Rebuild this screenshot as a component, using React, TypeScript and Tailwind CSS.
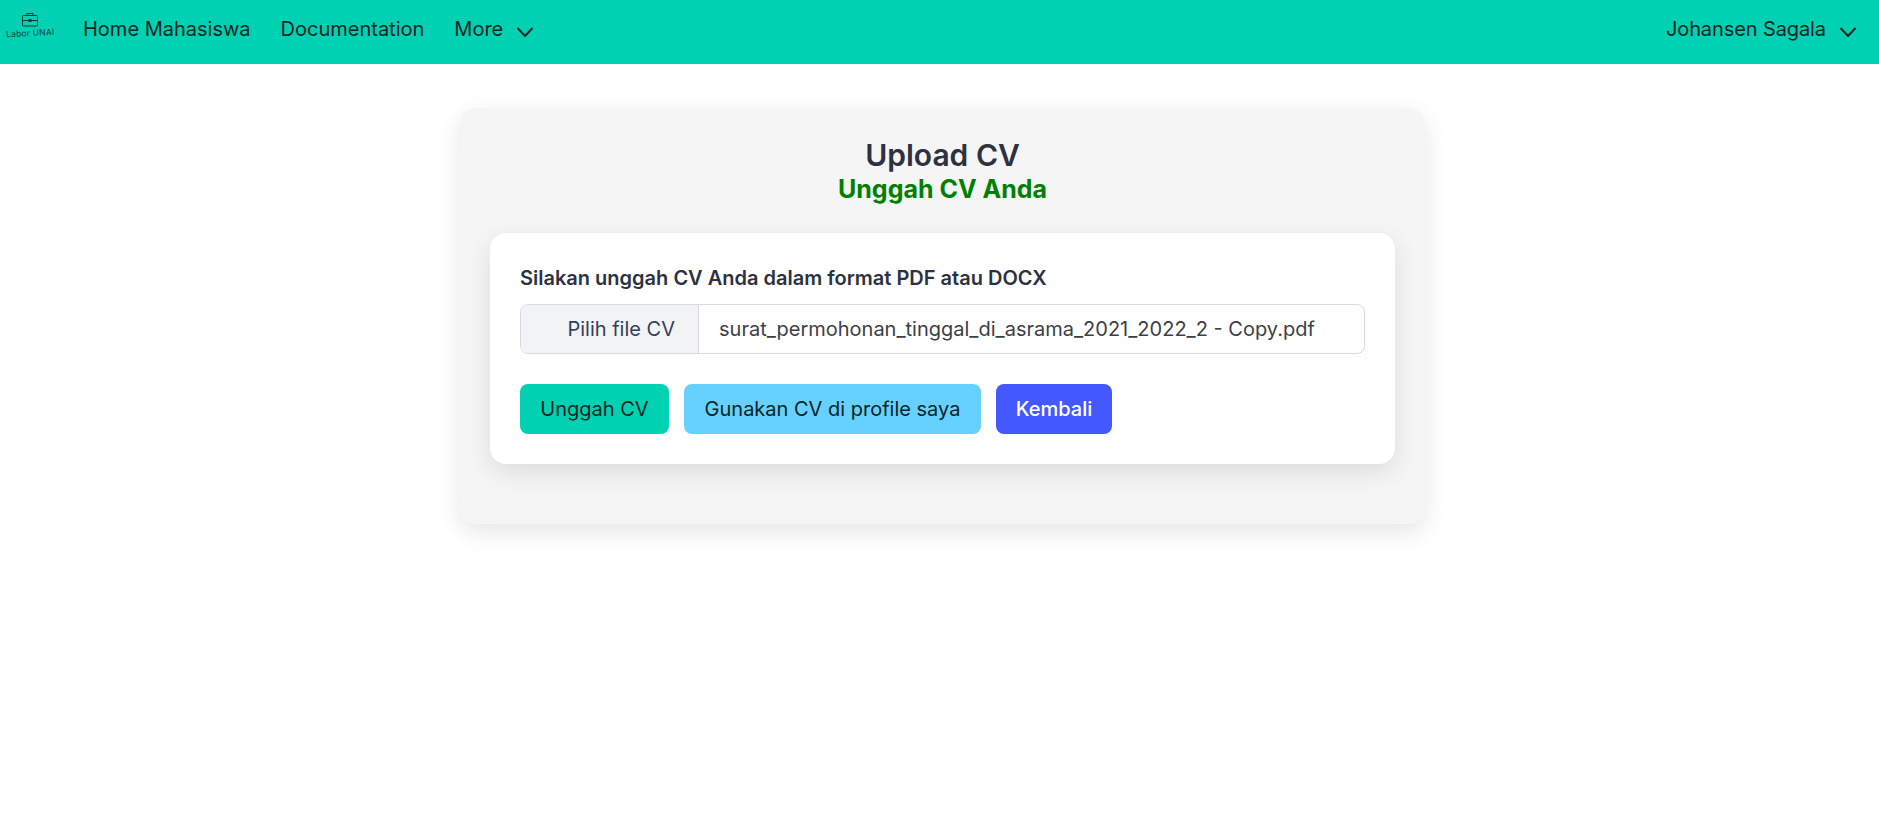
import React from "react";

const Chevron = () => (
  <svg width="20" height="12" viewBox="0 0 20 12" fill="none" className="block">
    <path d="M2.5 2 L10 10 L17.5 2" stroke="#0b2523" strokeWidth="2" />
  </svg>
);

const Logo = () => (
  <div className="flex flex-col items-center w-[44px] ml-[8px] mt-[-14px]">
    <svg width="18" height="15" viewBox="0 0 18 15" fill="none" stroke="#0b3b38" strokeWidth="1">
      <rect x="1.5" y="3.5" width="15" height="10.5" rx="1" />
      <path d="M6 3.5V1.5H12V3.5M1.5 8.5H16.5" />
      <rect x="8" y="7.5" width="2" height="2" fill="#0b3b38" />
    </svg>
    <span className="text-[8.5px] tracking-[0.2px] leading-[10px] mt-[1px] text-[#0b3b38] whitespace-nowrap font-['Inter',sans-serif] -rotate-3">
      Labor UNAI
    </span>
  </div>
);

export default function App() {
  return (
    <div className="min-h-[821px] bg-white font-['Inter',sans-serif] text-[20px] text-[#0b2523]">
      <nav className="h-16 bg-[#00d1b2] flex items-center pr-[21px]">
        <Logo />
        <div className="flex items-center ml-[31px] mt-[-6px] gap-[30px]">
          <span>Home Mahasiswa</span>
          <span>Documentation</span>
          <span className="flex items-center gap-[12px]">
            More
            <span className="mt-[6px]"><Chevron /></span>
          </span>
        </div>
        <div className="ml-auto flex items-center gap-[12px] mt-[-6px]">
          <span className="tracking-[-0.1px]">Johansen Sagala</span>
          <span className="mt-[6px]"><Chevron /></span>
        </div>
      </nav>

      <main className="ml-[460px] mt-[44px] w-[965px] h-[416px] rounded-2xl bg-[#f5f5f5] shadow-[0_8px_24px_rgba(0,0,0,0.1)] px-[30px] pt-[28px]">
        <h1 className="text-center text-[30px] leading-[38px] font-semibold text-[#2c3240]">Upload CV</h1>
        <h2 className="text-center text-[25px] leading-[30px] font-bold text-[#008000]">Unggah CV Anda</h2>
        <section className="mt-[29px] h-[231px] rounded-2xl bg-white shadow-[0_8px_24px_rgba(0,0,0,0.1)] px-[30px] pt-[32px]">
          <p className="text-[20px] leading-[27px] font-semibold text-[#2c3240]">
            Silakan unggah CV Anda dalam format PDF atau DOCX
          </p>
          <div className="mt-[12px] h-[50px] flex rounded-lg border border-[#d9d9e3] overflow-hidden">
            <div className="w-[178px] bg-[#f2f3f5] border-r border-[#d9d9e3] flex items-center justify-end pr-[23px] text-[#33415c]">
              Pilih file CV
            </div>
            <div className="flex-1 flex items-center pl-[20px] text-[#3b3f48]">
              surat_permohonan_tinggal_di_asrama_2021_2022_2 - Copy.pdf
            </div>
          </div>
          <div className="mt-[30px] flex gap-[15px]">
            <button className="h-[50px] w-[149px] rounded-lg bg-[#00d1b2] text-[#0b2523]">Unggah CV</button>
            <button className="h-[50px] w-[297px] rounded-lg bg-[#66d0ff] text-[#0b2523]">Gunakan CV di profile saya</button>
            <button className="h-[50px] w-[116px] rounded-lg bg-[#4458ff] text-white font-medium">Kembali</button>
          </div>
        </section>
      </main>
    </div>
  );
}
